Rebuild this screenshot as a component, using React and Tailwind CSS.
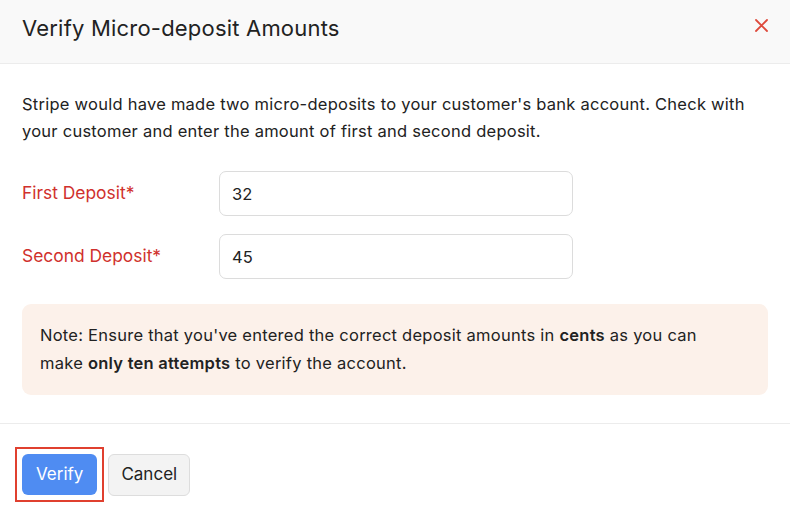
import React from 'react'

const App = () => {
  return (
    <div className="w-[790px] h-[522px] bg-white flex flex-col overflow-hidden" style={{ fontFamily: 'Inter, "Noto Sans", sans-serif' }}>
      {/* Header */}
      <div className="h-[64px] shrink-0 bg-[#f9f9f9] border-b border-[#ececec] flex items-center justify-between pl-[22px] pr-[22px] pb-[6px]">
        <h1 className="text-[22px] text-[#222] tracking-[0.2px]">Verify Micro-deposit Amounts</h1>
        <button className="w-[14px] h-[14px] flex items-center justify-center mb-[6px]">
          <svg width="13" height="13" viewBox="0 0 13 13" fill="none">
            <path d="M1 1L12 12M12 1L1 12" stroke="#de4a3c" strokeWidth="1.8" strokeLinecap="round" />
          </svg>
        </button>
      </div>

      {/* Body */}
      <div className="px-[22px] pt-[27px]">
        <p className="text-[16.5px] leading-[27px] tracking-[0.25px] text-[#222]">
          Stripe would have made two micro-deposits to your customer's bank account. Check with your customer and enter the amount of first and second deposit.
        </p>

        <div className="mt-[26px] flex flex-col gap-[18px]">
          <div className="flex items-start">
            <label className="w-[197px] pt-[9px] text-[17.4px] text-[#d0312d]">First Deposit*</label>
            <input
              defaultValue="32"
              className="w-[354px] h-[45px] rounded-[7px] border border-[#dcdcdc] px-[12px] text-[16.5px] text-[#222] outline-none"
            />
          </div>
          <div className="flex items-start">
            <label className="w-[197px] pt-[9px] text-[17.4px] text-[#d0312d]">Second Deposit*</label>
            <input
              defaultValue="45"
              className="w-[354px] h-[45px] rounded-[7px] border border-[#dcdcdc] px-[12px] text-[16.5px] text-[#222] outline-none"
            />
          </div>
        </div>

        <div className="mt-[25px] h-[91px] rounded-[9px] bg-[#fcf1ea] pl-[18px] pr-[30px] pt-[17px]">
          <p className="text-[16.5px] leading-[28px] tracking-[0.25px] text-[#222]">
            Note: Ensure that you've entered the correct deposit amounts in <span className="font-semibold">cents</span> as you can make <span className="font-semibold">only ten attempts</span> to verify the account.
          </p>
        </div>
      </div>

      {/* Footer */}
      <div className="mt-[28px] border-t border-[#ececec] flex items-center gap-[4px] pl-[15px] pt-[23px]">
        <div className="border-2 border-[#e0402f] p-[5px]">
          <button className="h-[41px] px-[14px] rounded-[6px] bg-[#4f8cf2] text-white text-[17px]">Verify</button>
        </div>
        <button className="h-[42px] px-[12px] rounded-[6px] bg-[#f3f3f3] border border-[#dddddd] text-[#222] text-[17px]">Cancel</button>
      </div>
    </div>
  )
}

export default App
